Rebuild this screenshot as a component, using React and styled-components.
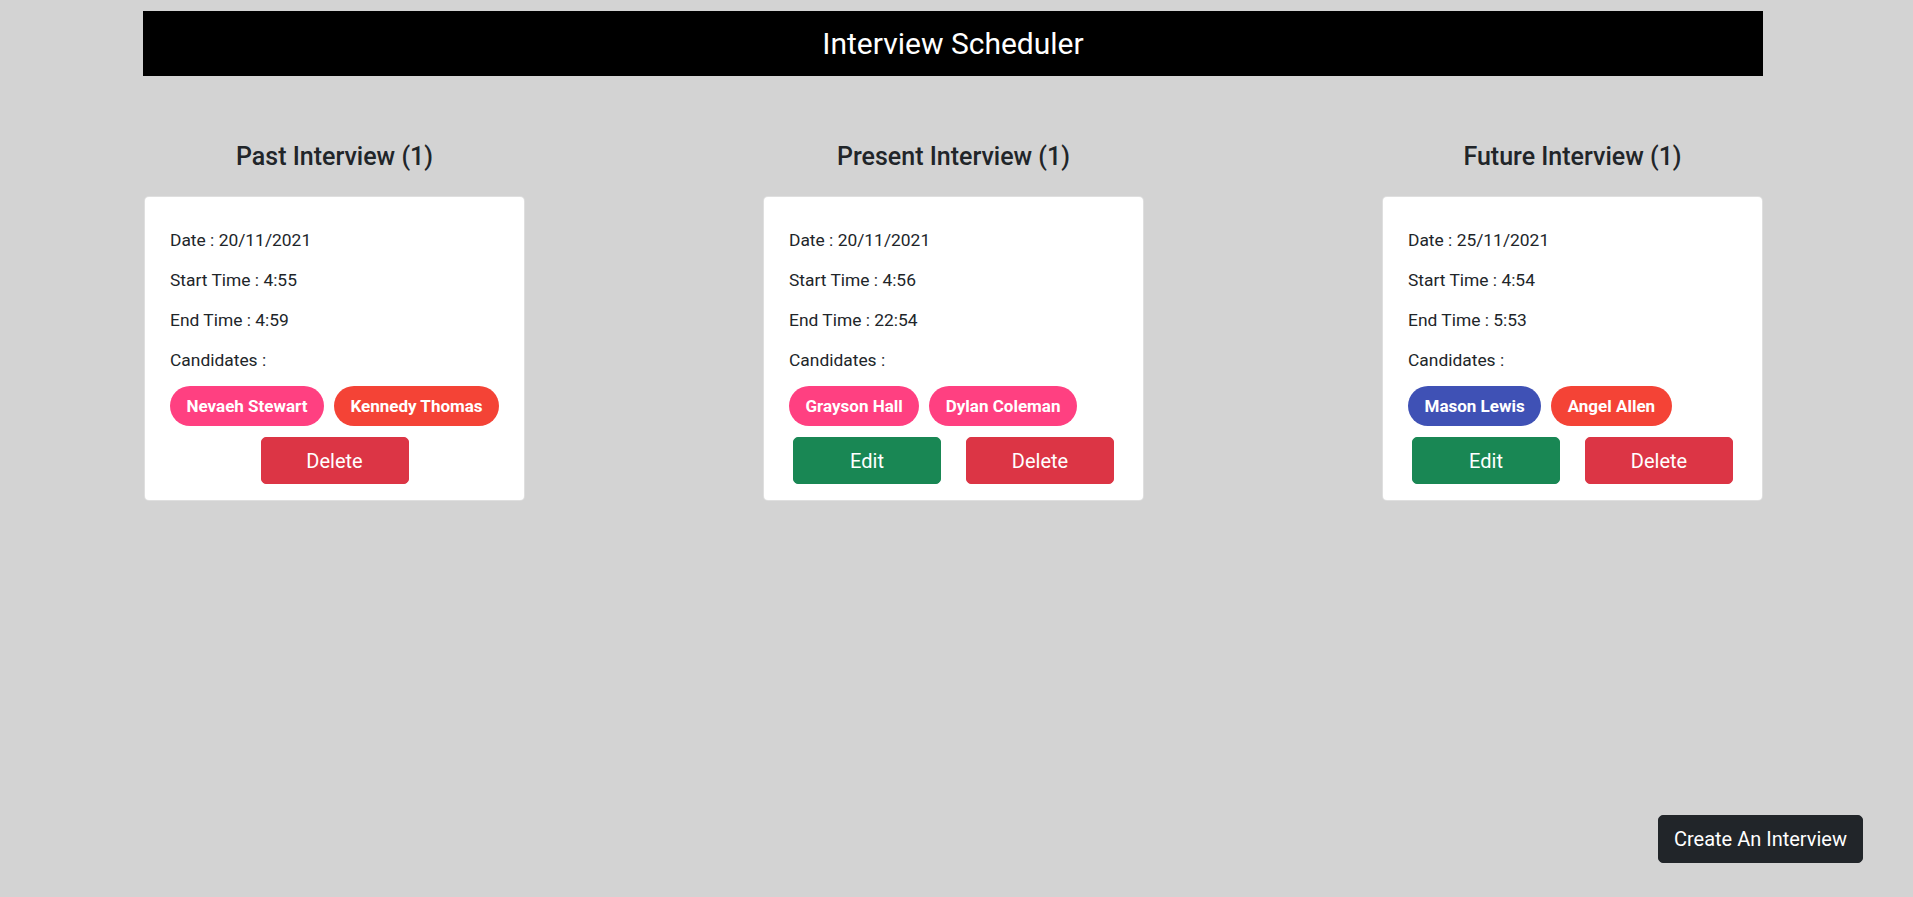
import React from "react";
import styled, { createGlobalStyle } from "styled-components";

const GlobalStyle = createGlobalStyle`
  html, body {
    margin: 0;
    padding: 0;
    background: #d3d3d3;
    font-family: Roboto, "Liberation Sans", Arial, sans-serif;
    color: #212529;
  }
  * { box-sizing: border-box; }
`;

const interviews = [
  {
    title: "Past Interview",
    items: [
      {
        date: "20/11/2021",
        start: "4:55",
        end: "4:59",
        candidates: [
          { name: "Nevaeh Stewart", color: "#ff4081" },
          { name: "Kennedy Thomas", color: "#f44336" },
        ],
        editable: false,
      },
    ],
  },
  {
    title: "Present Interview",
    items: [
      {
        date: "20/11/2021",
        start: "4:56",
        end: "22:54",
        candidates: [
          { name: "Grayson Hall", color: "#ff4081" },
          { name: "Dylan Coleman", color: "#ff4081" },
        ],
        editable: true,
      },
    ],
  },
  {
    title: "Future Interview",
    items: [
      {
        date: "25/11/2021",
        start: "4:54",
        end: "5:53",
        candidates: [
          { name: "Mason Lewis", color: "#3f51b5" },
          { name: "Angel Allen", color: "#f44336" },
        ],
        editable: true,
      },
    ],
  },
];

function InterviewCard({ item }) {
  return (
    <Card>
      <Line>Date : {item.date}</Line>
      <Line>Start Time : {item.start}</Line>
      <Line>End Time : {item.end}</Line>
      <Line>Candidates :</Line>
      <Chips>
        {item.candidates.map((c) => (
          <Chip key={c.name} $bg={c.color}>
            {c.name}
          </Chip>
        ))}
      </Chips>
      <Actions>
        {item.editable && <ActionButton $variant="success">Edit</ActionButton>}
        <ActionButton $variant="danger">Delete</ActionButton>
      </Actions>
    </Card>
  );
}

export default function App() {
  return (
    <>
      <GlobalStyle />
      <Page>
        <Header>
          <h3>Interview Scheduler</h3>
        </Header>
        <Columns>
          {interviews.map((col) => (
            <Column key={col.title}>
              <ColumnTitle>
                {col.title} ({col.items.length})
              </ColumnTitle>
              {col.items.map((item, i) => (
                <InterviewCard key={i} item={item} />
              ))}
            </Column>
          ))}
        </Columns>
      </Page>
      <CreateButton type="button">Create An Interview</CreateButton>
    </>
  );
}

const Page = styled.div`
  width: 1620px;
  margin: 0 0 0 143px;
  padding-top: 11px;
  min-height: 897px;
`;

const Header = styled.header`
  height: 65px;
  background: #000;
  display: flex;
  align-items: center;
  justify-content: center;

  h3 {
    margin: 0;
    color: #fff;
    font-size: 30px;
    font-weight: 400;
    line-height: 1.2;
  }
`;

const Columns = styled.div`
  display: flex;
  justify-content: space-between;
  margin-top: 66px;
  padding: 0 0 0 1px;
`;

const Column = styled.section`
  width: 381px;
  display: flex;
  flex-direction: column;
  gap: 16px;
`;

const ColumnTitle = styled.h4`
  margin: 0 0 8px;
  text-align: center;
  font-size: 25px;
  font-weight: 500;
  line-height: 1.2;
  color: #212529;
`;

const Card = styled.div`
  background: #fff;
  border: 1px solid rgba(0, 0, 0, 0.125);
  border-radius: 5px;
  padding: 31px 25px 16px;
`;

const Line = styled.p`
  margin: 0 0 16px;
  font-size: 17.4px;
  line-height: 24px;
  color: #212529;
`;

const Chips = styled.div`
  display: flex;
  gap: 10px;
  margin-top: -2px;
`;

const Chip = styled.span`
  display: inline-flex;
  align-items: center;
  flex-shrink: 0;
  white-space: nowrap;
  height: 40px;
  padding: 0 16.5px;
  border-radius: 20px;
  background: ${(p) => p.$bg};
  color: #fff;
  font-size: 17px;
  font-weight: 700;
`;

const Actions = styled.div`
  display: flex;
  justify-content: center;
  gap: 25px;
  margin-top: 11px;
`;

const ActionButton = styled.button`
  width: 148px;
  height: 47px;
  border: 1px solid ${(p) => (p.$variant === "success" ? "#198754" : "#dc3545")};
  background: ${(p) => (p.$variant === "success" ? "#198754" : "#dc3545")};
  color: #fff;
  border-radius: 5px;
  font-family: inherit;
  font-size: 20px;
  line-height: 1.5;
  cursor: pointer;
`;

const CreateButton = styled.button`
  position: fixed;
  right: 50px;
  bottom: 34px;
  height: 48px;
  padding: 0 15px;
  border: 1px solid #212529;
  background: #212529;
  color: #fff;
  border-radius: 5px;
  font-family: inherit;
  font-size: 20px;
  line-height: 1.5;
  cursor: pointer;
`;
